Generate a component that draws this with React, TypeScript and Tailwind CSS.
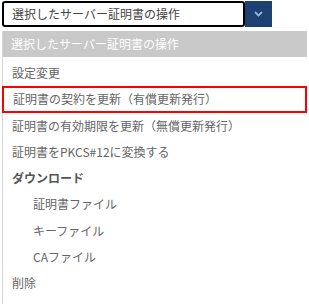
const items = [
  { label: '設定変更' },
  { label: '証明書の契約を更新（有償更新発行）', selected: true },
  { label: '証明書の有効期限を更新（無償更新発行）' },
  { label: '証明書をPKCS#12に変換する' },
  { label: 'ダウンロード', group: true },
  { label: '証明書ファイル', sub: true },
  { label: 'キーファイル', sub: true },
  { label: 'CAファイル', sub: true },
  { label: '削除' },
];

export default function App() {
  return (
    <div
      className="w-[309px] h-[304px] bg-white overflow-hidden text-[12px]"
      style={{ fontFamily: '"Noto Sans CJK JP", "Noto Sans", sans-serif' }}
    >
      <div className="flex pl-[2px] pt-[1px]">
        <div className="w-[243px] h-[26px] border-2 border-black rounded-[3px] bg-white flex items-center pl-[8px] text-[#444]">
          選択したサーバー証明書の操作
        </div>
        <div className="w-[27px] h-[26px] bg-[#1d4170] flex items-center justify-center">
          <svg width="9" height="6" viewBox="0 0 9 6" fill="none">
            <path d="M1 1l3.5 3.5L8 1" stroke="#8fb3e0" strokeWidth="1.8" />
          </svg>
        </div>
      </div>
      <div className="ml-[2px] mt-[4px] w-[305px] border-l border-[#d6d6d6] h-[300px]">
        <div className="h-[26px] bg-[#c9c9c9] text-white flex items-center pl-[8px]">
          選択したサーバー証明書の操作
        </div>
        <div className="pt-[3px]">
          {items.map((it) => (
            <div
              key={it.label}
              className={
                'h-[26.25px] flex items-center ' +
                (it.selected ? 'border-2 border-[#ff0000] -ml-[1px] pl-[9px] ' : 'pl-[9px] ') +
                (it.sub ? 'pl-[30px] ' : '') +
                (it.group ? 'font-bold text-[#555]' : 'text-[#666]')
              }
            >
              {it.label}
            </div>
          ))}
        </div>
      </div>
    </div>
  );
}
